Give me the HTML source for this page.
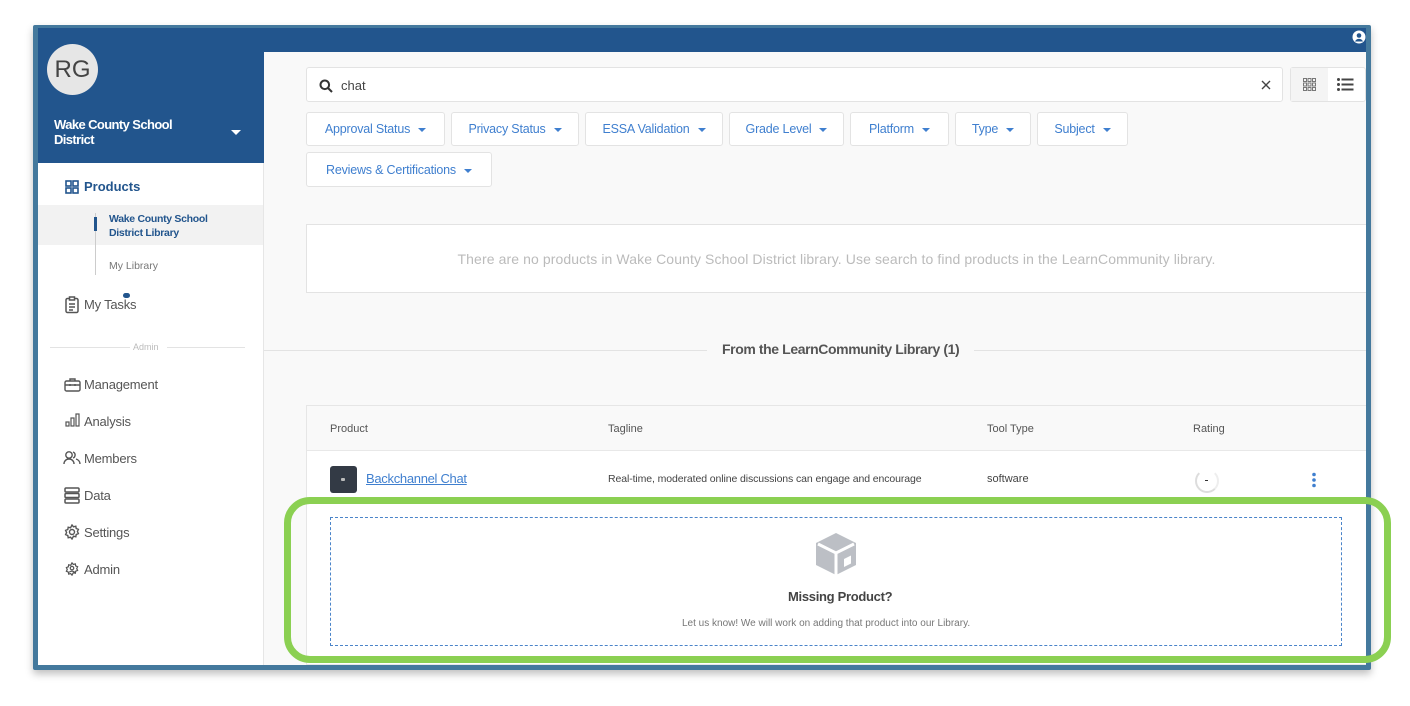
<!DOCTYPE html>
<html><head><style>
*{box-sizing:border-box;margin:0;padding:0}
body{width:1410px;height:706px;background:#fff;position:relative;overflow:hidden;font-family:"Liberation Sans",sans-serif}
.a{position:absolute}
.frame{left:33px;top:25px;width:1338px;height:645px;background:#44799d;box-shadow:0 4px 8px rgba(0,0,0,.25);border-radius:2px}
.top{left:38px;top:28px;width:1328px;height:24px;background:#22558d}
.side{left:38px;top:28px;width:226px;height:637px;background:#fff;border-right:1px solid #e6e6e6}
.sidehead{left:38px;top:28px;width:226px;height:135px;background:#22558d}
.main{left:264px;top:52px;width:1102px;height:613px;background:#f9f9f9}
.nav{font-size:13px;color:#555;left:84px;letter-spacing:-.2px}
.btn{top:112px;height:34px;background:#fff;border:1px solid #e3e3e3;border-radius:3px;color:#3f7fcf;font-size:12.5px;letter-spacing:-.2px;display:flex;align-items:center;justify-content:center}
.btn:after{content:"";border:4px solid transparent;border-top:4px solid #3f7fcf;border-bottom:0;margin-left:8px;margin-top:2px}
</style></head><body>
<div class="a frame"></div>
<div class="a side"></div>
<div class="a sidehead"></div>
<div class="a top"></div>
<div class="a main"></div>
<svg class="a" style="left:1352px;top:30px" width="14" height="14" viewBox="0 0 14 14"><circle cx="7" cy="7" r="6.5" fill="#fff"/><circle cx="7" cy="5.5" r="2.3" fill="#22558d"/><path d="M3 11.5c1-2 2.5-2.6 4-2.6s3 .6 4 2.6" fill="#22558d"/></svg>
<div class="a" style="left:47px;top:44px;width:51px;height:51px;border-radius:50%;background:#e6e6e6;color:#444;font-size:24px;display:flex;align-items:center;justify-content:center">RG</div>
<div class="a" style="left:54px;top:117px;color:#fff;font-size:13px;font-weight:bold;line-height:15px;letter-spacing:-.6px">Wake County School<br>District</div>
<div class="a" style="left:231px;top:130px;border:5px solid transparent;border-top:5px solid #fff;border-bottom:0"></div>
<svg class="a" style="left:65px;top:180px" width="14" height="14" viewBox="0 0 14 14" fill="none" stroke="#22558d" stroke-width="1.6"><rect x="1" y="1" width="5" height="5"/><rect x="8" y="1" width="5" height="5"/><rect x="1" y="8" width="5" height="5"/><rect x="8" y="8" width="5" height="5"/></svg>
<div class="a" style="left:84px;top:179px;font-size:13px;font-weight:bold;color:#22558d">Products</div>
<div class="a" style="left:38px;top:205px;width:225px;height:40px;background:#f2f2f2"></div>
<div class="a" style="left:95px;top:213px;width:1px;height:62px;background:#ccc"></div>
<div class="a" style="left:94px;top:217px;width:3px;height:14px;background:#22558d"></div>
<div class="a" style="left:109px;top:212px;font-size:10.5px;font-weight:bold;color:#22558d;line-height:14px;letter-spacing:-.3px">Wake County School<br>District Library</div>
<div class="a" style="left:109px;top:260px;font-size:10.5px;color:#777">My Library</div>
<svg class="a" style="left:65px;top:296px" width="14" height="18" viewBox="0 0 14 18" fill="none" stroke="#555" stroke-width="1.5"><rect x="1" y="2.5" width="12" height="14" rx="1.5"/><rect x="4.5" y="1" width="5" height="3" fill="#fff"/><path d="M4 8h6M4 11h6M4 14h4"/></svg>
<div class="a nav" style="top:297px">My Tasks</div>
<div class="a" style="left:123px;top:293px;width:7px;height:5px;border-radius:3px;background:#22558d"></div>
<div class="a" style="left:50px;top:347px;width:80px;height:1px;background:#e3e3e3"></div>
<div class="a" style="left:133px;top:342px;font-size:9px;color:#bbb">Admin</div>
<div class="a" style="left:167px;top:347px;width:78px;height:1px;background:#e3e3e3"></div>
<svg class="a" style="left:64px;top:377px" width="17" height="15" viewBox="0 0 17 15" fill="none" stroke="#555" stroke-width="1.4"><rect x="1" y="4" width="15" height="10" rx="1.5"/><path d="M6 4V2h5v2M1 8h15M6 7v2M11 7v2"/></svg>
<div class="a nav" style="top:377px">Management</div>
<svg class="a" style="left:65px;top:413px" width="15" height="14" viewBox="0 0 15 14" fill="none" stroke="#555" stroke-width="1.2"><rect x="1" y="9" width="3" height="4"/><rect x="6" y="5" width="3" height="8"/><rect x="11" y="1" width="3" height="12"/></svg>
<div class="a nav" style="top:414px">Analysis</div>
<svg class="a" style="left:63px;top:450px" width="18" height="15" viewBox="0 0 18 15" fill="none" stroke="#555" stroke-width="1.4"><circle cx="6" cy="5" r="3.2"/><path d="M1 14c0-3 2.2-5 5-5s5 2 5 5"/><path d="M10 2a3.2 3.2 0 0 1 0 6M13 9c2 .6 4 2.4 4 5"/></svg>
<div class="a nav" style="top:451px">Members</div>
<svg class="a" style="left:64px;top:487px" width="16" height="17" viewBox="0 0 16 17" fill="none" stroke="#555" stroke-width="1.5"><rect x="1" y="1" width="14" height="4" rx="1"/><rect x="1" y="6.5" width="14" height="4" rx="1"/><rect x="1" y="12" width="14" height="4" rx="1"/></svg>
<div class="a nav" style="top:488px">Data</div>
<svg class="a" style="left:64px;top:524px" width="16" height="16" viewBox="0 0 16 16" fill="none" stroke="#555" stroke-width="1.4"><path d="M8 1l1.5 1.8 2.3-.6.4 2.3 2.2.9-1 2.1 1 2.1-2.2.9-.4 2.3-2.3-.6L8 15l-1.5-1.8-2.3.6-.4-2.3-2.2-.9 1-2.1-1-2.1 2.2-.9.4-2.3 2.3.6z"/><circle cx="8" cy="8" r="2.5"/></svg>
<div class="a nav" style="top:525px">Settings</div>
<svg class="a" style="left:65px;top:562px" width="14" height="14" viewBox="0 0 16 16" fill="none" stroke="#555" stroke-width="1.4"><path d="M8 1l1.5 1.8 2.3-.6.4 2.3 2.2.9-1 2.1 1 2.1-2.2.9-.4 2.3-2.3-.6L8 15l-1.5-1.8-2.3.6-.4-2.3-2.2-.9 1-2.1-1-2.1 2.2-.9.4-2.3 2.3.6z"/><circle cx="8" cy="7" r="2"/><path d="M5 12c.5-2 5.5-2 6 0"/></svg>
<div class="a nav" style="top:562px">Admin</div>

<div class="a" style="left:306px;top:67px;width:977px;height:35px;background:#fff;border:1px solid #e3e3e3;border-radius:3px"></div>
<svg class="a" style="left:319px;top:79px" width="14" height="14" viewBox="0 0 14 14" fill="none" stroke="#333" stroke-width="2"><circle cx="5.8" cy="5.8" r="4.3"/><path d="M9 9l4 4"/></svg>
<div class="a" style="left:341px;top:78px;font-size:13px;color:#444">chat</div>
<svg class="a" style="left:1261px;top:80px" width="10" height="10" viewBox="0 0 10 10" stroke="#444" stroke-width="1.4"><path d="M1 1l8 8M9 1L1 9"/></svg>
<div class="a" style="left:1290px;top:67px;width:76px;height:35px;background:#fff;border:1px solid #e3e3e3;border-radius:3px"></div>
<div class="a" style="left:1291px;top:68px;width:37px;height:33px;background:#f4f4f4"></div>
<svg class="a" style="left:1303px;top:78px" width="13" height="13" viewBox="0 0 13 13" fill="none" stroke="#777" stroke-width="1"><rect x=".5" y=".5" width="3" height="3"/><rect x="5" y=".5" width="3" height="3"/><rect x="9.5" y=".5" width="3" height="3"/><rect x=".5" y="5" width="3" height="3"/><rect x="5" y="5" width="3" height="3"/><rect x="9.5" y="5" width="3" height="3"/><rect x=".5" y="9.5" width="3" height="3"/><rect x="5" y="9.5" width="3" height="3"/><rect x="9.5" y="9.5" width="3" height="3"/></svg>
<svg class="a" style="left:1337px;top:78px" width="17" height="13" viewBox="0 0 17 13" fill="#444"><circle cx="1.5" cy="1.5" r="1.5"/><circle cx="1.5" cy="6.5" r="1.5"/><circle cx="1.5" cy="11.5" r="1.5"/><rect x="4.5" y=".5" width="12" height="2"/><rect x="4.5" y="5.5" width="12" height="2"/><rect x="4.5" y="10.5" width="12" height="2"/></svg>

<div class="a btn" style="left:306px;width:139px">Approval Status</div>
<div class="a btn" style="left:451px;width:128px">Privacy Status</div>
<div class="a btn" style="left:585px;width:138px">ESSA Validation</div>
<div class="a btn" style="left:729px;width:115px">Grade Level</div>
<div class="a btn" style="left:850px;width:99px">Platform</div>
<div class="a btn" style="left:955px;width:76px">Type</div>
<div class="a btn" style="left:1037px;width:91px">Subject</div>
<div class="a btn" style="left:306px;top:152px;width:186px;height:35px">Reviews &amp; Certifications</div>

<div class="a" style="left:306px;top:224px;width:1060px;height:69px;background:#fff;border:1px solid #e3e3e3;border-right:0;display:flex;align-items:center;justify-content:center;font-size:14px;color:#bbb;letter-spacing:.1px">There are no products in Wake County School District library. Use search to find products in the LearnCommunity library.</div>

<div class="a" style="left:264px;top:350px;width:443px;height:1px;background:#e3e3e3"></div>
<div class="a" style="left:722px;top:341px;font-size:14px;font-weight:bold;color:#555;letter-spacing:-.4px">From the LearnCommunity Library (1)</div>
<div class="a" style="left:974px;top:350px;width:392px;height:1px;background:#e3e3e3"></div>

<div class="a" style="left:306px;top:405px;width:1060px;height:260px;background:#fff;border:1px solid #e6e6e6;border-right:0"></div>
<div class="a" style="left:307px;top:406px;width:1059px;height:45px;background:#f9f9f9;border-bottom:1px solid #e8e8e8"></div>
<div class="a" style="left:330px;top:423px;font-size:11px;color:#555">Product</div>
<div class="a" style="left:608px;top:423px;font-size:11px;color:#555">Tagline</div>
<div class="a" style="left:987px;top:423px;font-size:11px;color:#555">Tool Type</div>
<div class="a" style="left:1193px;top:423px;font-size:11px;color:#555">Rating</div>
<div class="a" style="left:330px;top:466px;width:27px;height:27px;border-radius:3px;background:#333a45"></div>
<div class="a" style="left:341px;top:478px;width:4px;height:3px;background:#bbb;border-radius:1px"></div>
<div class="a" style="left:366px;top:471px;font-size:13px;color:#3f7fcf;text-decoration:underline;letter-spacing:-.3px">Backchannel Chat</div>
<div class="a" style="left:608px;top:473px;font-size:10.5px;color:#444;letter-spacing:-.1px">Real-time, moderated online discussions can engage and encourage</div>
<div class="a" style="left:987px;top:473px;font-size:11px;color:#444">software</div>
<div class="a" style="left:1195px;top:469px;width:24px;height:24px;border-radius:50%;border:2px solid #ddd;border-top-color:#fff;border-right-color:#eee"></div>
<div class="a" style="left:1205px;top:480px;width:3px;height:1px;background:#333"></div>
<svg class="a" style="left:1311px;top:472px" width="6" height="16" viewBox="0 0 6 16" fill="#3f7fcf"><circle cx="3" cy="2.5" r="1.8"/><circle cx="3" cy="8" r="1.8"/><circle cx="3" cy="13.5" r="1.8"/></svg>

<div class="a" style="left:330px;top:517px;width:1012px;height:129px;border:1px dashed #4a84c9"></div>
<svg class="a" style="left:814px;top:532px" width="44" height="44" viewBox="0 0 44 44"><path d="M22 1L42 11v22L22 43 2 33V11z" fill="#bcbfc5"/><path d="M4 12L22 21 40 12" fill="none" stroke="#fff" stroke-width="3"/><path d="M22 21v22" stroke="#fff" stroke-width="3"/><path d="M30 27l7-3.5v8L30 35z" fill="#fff"/></svg>
<div class="a" style="left:788px;top:589px;font-size:13px;font-weight:bold;color:#444;letter-spacing:-.3px">Missing Product?</div>
<div class="a" style="left:682px;top:618px;font-size:10px;color:#777">Let us know! We will work on adding that product into our Library.</div>

<div class="a" style="left:284px;top:497px;width:1107px;height:166px;border:7px solid #8bd052;border-radius:26px"></div>
</body></html>
